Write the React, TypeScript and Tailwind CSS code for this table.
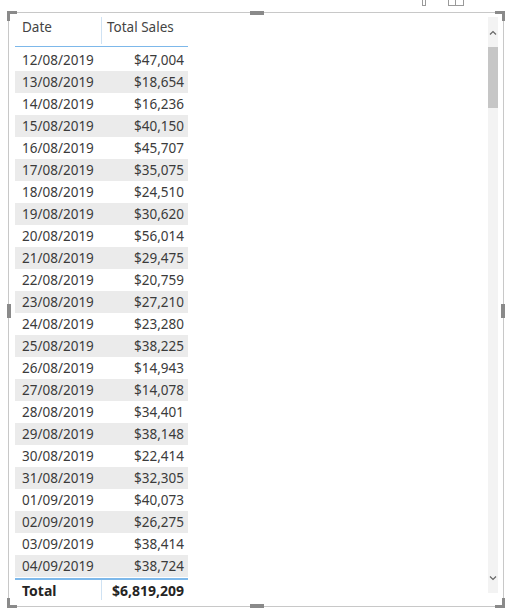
import React from "react";

const rows: [string, string][] = [
  ["12/08/2019", "$47,004"],
  ["13/08/2019", "$18,654"],
  ["14/08/2019", "$16,236"],
  ["15/08/2019", "$40,150"],
  ["16/08/2019", "$45,707"],
  ["17/08/2019", "$35,075"],
  ["18/08/2019", "$24,510"],
  ["19/08/2019", "$30,620"],
  ["20/08/2019", "$56,014"],
  ["21/08/2019", "$29,475"],
  ["22/08/2019", "$20,759"],
  ["23/08/2019", "$27,210"],
  ["24/08/2019", "$23,280"],
  ["25/08/2019", "$38,225"],
  ["26/08/2019", "$14,943"],
  ["27/08/2019", "$14,078"],
  ["28/08/2019", "$34,401"],
  ["29/08/2019", "$38,148"],
  ["30/08/2019", "$22,414"],
  ["31/08/2019", "$32,305"],
  ["01/09/2019", "$40,073"],
  ["02/09/2019", "$26,275"],
  ["03/09/2019", "$38,414"],
  ["04/09/2019", "$38,724"],
];

export default function App() {
  return (
    <div
      className="relative w-[513px] h-[614px] bg-white overflow-hidden text-[#3b3b3b]"
      style={{ fontFamily: '"Noto Sans", "Open Sans", sans-serif' }}
    >
      {/* top-right header icons (cut off) */}
      <div className="absolute left-[422px] top-0 w-[4px] h-[6px] border border-t-0 border-[#9a9a9a]" />
      <div className="absolute left-[448px] top-0 w-[16px] h-[6px] border border-t-0 border-[#9a9a9a] flex">
        <div className="w-[7px] h-full border-r border-[#9a9a9a]" />
      </div>

      {/* visual frame */}
      <div className="relative ml-[8px] mt-[12px] w-[496px] h-[595px] border border-[#c8c8c8] flex">
        <div className="flex-1 pl-[6px] flex flex-col">
          <div className="w-[173px] flex flex-col">
            {/* header */}
            <div className="h-[34px] flex border-b border-[#7db8ea] text-[13.5px] text-[#444444]">
              <div className="w-[87px] flex items-end pb-[7px] pl-[7px] border-r border-[#cfe2f3] mt-[4px] mb-[2px]">Date</div>
              <div className="flex-1 flex items-end pb-[9px] pl-[5px]">Total Sales</div>
            </div>
            {/* rows */}
            <div className="mt-[2px]">
              {rows.map(([d, v], i) => (
                <div
                  key={d}
                  className={`h-[22px] flex items-center text-[13.5px] ${i % 2 === 1 ? "bg-[#ebebeb]" : "bg-white"}`}
                >
                  <div className="w-[87px] pl-[7px]">{d}</div>
                  <div className="flex-1 text-right pr-[4px]">{v}</div>
                </div>
              ))}
            </div>
            {/* total */}
            <div className="mt-[1px] border-t-2 border-[#7db8ea] h-[22px] flex text-[14px] font-bold text-[#252423]">
              <div className="w-[87px] pl-[7px] flex items-center border-r border-[#cfe2f3]">Total</div>
              <div className="flex-1 text-right pr-[4px] flex items-center justify-end">$6,819,209</div>
            </div>
          </div>
        </div>
        {/* scrollbar */}
        <div className="mt-[4px] mr-[5px] w-[10px] h-[576px] bg-[#f3f3f3] flex flex-col items-center">
          <svg width="8" height="6" viewBox="0 0 8 6" className="mt-[13px]">
            <path d="M1 4.5 L4 1.5 L7 4.5" fill="none" stroke="#666" strokeWidth="1.2" />
          </svg>
          <div className="mt-[11px] w-[10px] h-[61px] bg-[#c6c6c6]" />
          <div className="flex-1" />
          <svg width="8" height="6" viewBox="0 0 8 6" className="mb-[12px]">
            <path d="M1 1.5 L4 4.5 L7 1.5" fill="none" stroke="#666" strokeWidth="1.2" />
          </svg>
        </div>

        {/* corner brackets */}
        <div className="absolute -left-[2px] -top-[2px] w-[10px] h-[10px] border-l-[3px] border-t-[3px] border-[#8a8a8a]" />
        <div className="absolute -right-[2px] -top-[2px] w-[10px] h-[10px] border-r-[3px] border-t-[3px] border-[#8a8a8a]" />
        <div className="absolute -left-[2px] -bottom-[2px] w-[10px] h-[10px] border-l-[3px] border-b-[3px] border-[#8a8a8a]" />
        <div className="absolute -right-[2px] -bottom-[2px] w-[10px] h-[10px] border-r-[3px] border-b-[3px] border-[#8a8a8a]" />
        {/* mid handles */}
        <div className="absolute left-[241px] -top-[2px] w-[14px] h-[4px] bg-[#8a8a8a]" />
        <div className="absolute left-[241px] -bottom-[2px] w-[14px] h-[4px] bg-[#8a8a8a]" />
        <div className="absolute -left-[2px] top-[291px] w-[4px] h-[14px] bg-[#8a8a8a]" />
        <div className="absolute -right-[2px] top-[291px] w-[4px] h-[14px] bg-[#8a8a8a]" />
      </div>
    </div>
  );
}
